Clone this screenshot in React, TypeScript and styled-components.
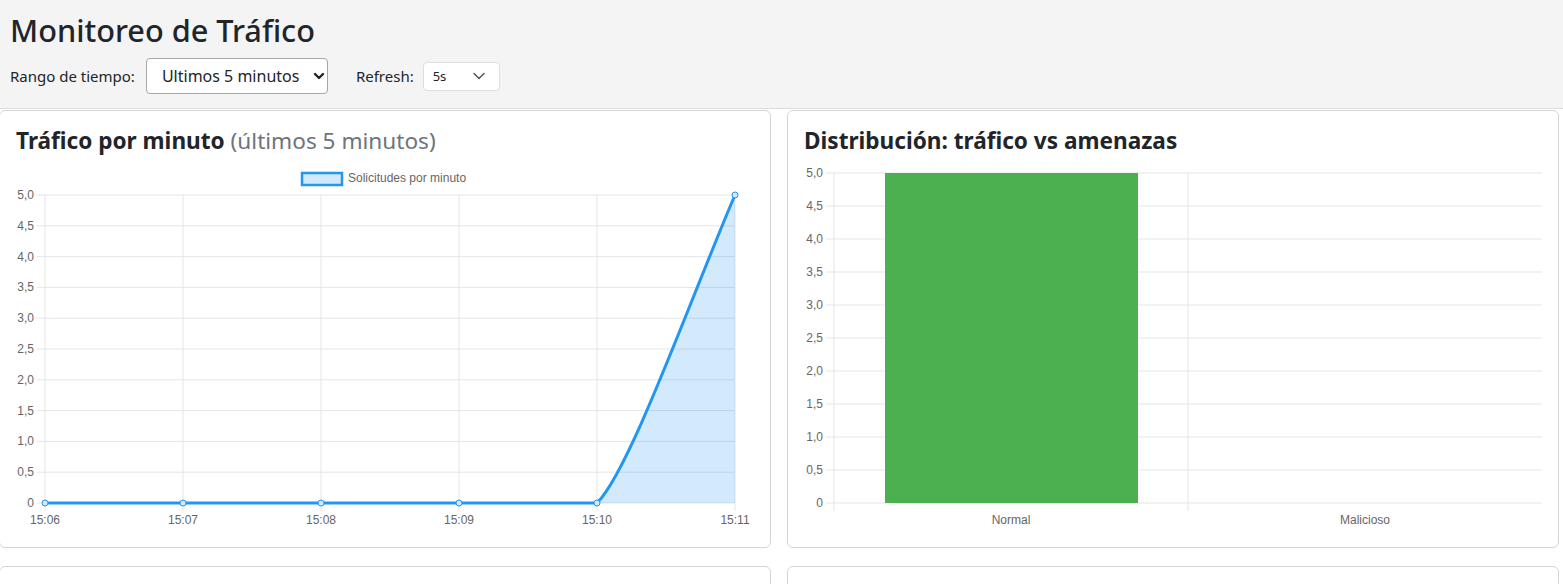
import React from "react";
import styled, { createGlobalStyle } from "styled-components";

const Global = createGlobalStyle`
  html, body { margin: 0; padding: 0; overflow: hidden; background: #ffffff; }
  body { font-family: "Noto Sans", "Open Sans", sans-serif; color: #212529; }
`;

const Header = styled.header`
  background: #f4f4f4;
  border-bottom: 1px solid #dcdcdc;
  padding: 10px 10px 15px;
  height: 109px;
  box-sizing: border-box;
`;

const Title = styled.h1`
  margin: 0;
  font-size: 30.7px;
  font-weight: 500;
  line-height: 40px;
  color: #212529;
`;

const Controls = styled.div`
  display: flex;
  align-items: center;
  margin-top: 8px;
  height: 36px;
`;

const Label = styled.span<{ $gap: number }>`
  font-size: 15px;
  margin-right: ${(p) => p.$gap}px;
  color: #212529;
`;

const SelectWrap = styled.div<{ $w: number; $h: number; $border: string }>`
  position: relative;
  width: ${(p) => p.$w}px;
  height: ${(p) => p.$h}px;
  border: 1px solid ${(p) => p.$border};
  border-radius: 4px;
  background: #fff;
  box-sizing: border-box;
  margin-right: 28px;
  display: flex;
  align-items: center;
`;

const Select = styled.select<{ $size: number; $pl: number }>`
  appearance: none;
  border: none;
  background: transparent;
  font-family: "Noto Sans", "Open Sans", sans-serif;
  font-size: ${(p) => p.$size}px;
  color: #212529;
  padding: 0 0 0 ${(p) => p.$pl}px;
  width: 100%;
  height: 100%;
  outline: none;
`;

const Chevron = styled.svg<{ $right: number }>`
  position: absolute;
  right: ${(p) => p.$right}px;
  top: 50%;
  transform: translateY(-50%);
  pointer-events: none;
`;

const Grid = styled.main`
  display: grid;
  grid-template-columns: 772px 772px;
  column-gap: 16px;
  row-gap: 18px;
  padding-top: 1px;
  margin-left: -1px;
`;

const Card = styled.section`
  border: 1px solid #d4d4d4;
  border-radius: 6px;
  background: #fff;
  padding: 16px;
  height: 438px;
  box-sizing: border-box;
  display: flex;
  flex-direction: column;
`;

const CardTitle = styled.h2`
  margin: 0;
  font-size: 22.6px;
  line-height: 28px;
  font-weight: 700;
  color: #212529;
`;

const Muted = styled.span`
  font-weight: 400;
  color: #6c757d;
`;

const ChartSvg = styled.svg`
  display: block;
  width: 738px;
  height: 376px;
  font-family: "Liberation Sans", Arial, sans-serif;
`;

const GRID = "#e5e5e5";
const TICK = "#666";

function LineChart() {
  const yTop = 195;
  const yBot = 503;
  const xs = [45, 183, 321, 459, 597, 735];
  const labels = ["15:06", "15:07", "15:08", "15:09", "15:10", "15:11"];
  const yt = ["0", "0,5", "1,0", "1,5", "2,0", "2,5", "3,0", "3,5", "4,0", "4,5", "5,0"];
  const step = (yBot - yTop) / 10;
  const curve = "C630,470 690,300 735,195";
  return (
    <ChartSvg viewBox="0 0 738 376">
      <g transform="translate(-16,-155)">
        <rect x={302} y={173} width={40} height={12} fill="#d2e8fb" stroke="#2196f3" strokeWidth={2.5} />
        <text x={348} y={182} fontSize={12} fill={TICK}>Solicitudes por minuto</text>
        {yt.map((t, i) => {
          const y = yBot - i * step;
          return (
            <g key={t}>
              <line x1={37} x2={735} y1={y} y2={y} stroke={GRID} strokeWidth={1} />
              <text x={34} y={y + 4} fontSize={12} fill={TICK} textAnchor="end">{t}</text>
            </g>
          );
        })}
        {xs.map((x, i) => (
          <g key={x}>
            <line x1={x} x2={x} y1={yTop} y2={511} stroke={GRID} strokeWidth={1} />
            <text x={x} y={524} fontSize={12} fill={TICK} textAnchor="middle">{labels[i]}</text>
          </g>
        ))}
        <path d={`M597,503 ${curve} L735,503 Z`} fill="rgba(33,150,243,0.2)" />
        <path d={`M45,503 L597,503 ${curve}`} fill="none" stroke="#2196f3" strokeWidth={3} />
        {xs.map((x, i) => (
          <circle key={x} cx={x} cy={i === 5 ? 195 : 503} r={3} fill="#d2e8fb" stroke="#2196f3" strokeWidth={1} />
        ))}
      </g>
    </ChartSvg>
  );
}

function BarChart() {
  const yTop = 173;
  const yBot = 503;
  const yt = ["0", "0,5", "1,0", "1,5", "2,0", "2,5", "3,0", "3,5", "4,0", "4,5", "5,0"];
  const step = (yBot - yTop) / 10;
  return (
    <ChartSvg viewBox="0 0 738 376">
      <g transform="translate(-804,-155)">
        {yt.map((t, i) => {
          const y = yBot - i * step;
          return (
            <g key={t}>
              <line x1={826} x2={1542} y1={y} y2={y} stroke={GRID} strokeWidth={1} />
              <text x={823} y={y + 4} fontSize={12} fill={TICK} textAnchor="end">{t}</text>
            </g>
          );
        })}
        <line x1={834} x2={834} y1={yTop} y2={511} stroke={GRID} />
        <line x1={1188} x2={1188} y1={yTop} y2={511} stroke={GRID} />
        <rect x={885} y={yTop} width={253} height={yBot - yTop} fill="#4caf50" />
        <text x={1011} y={524} fontSize={12} fill={TICK} textAnchor="middle">Normal</text>
        <text x={1365} y={524} fontSize={12} fill={TICK} textAnchor="middle">Malicioso</text>
      </g>
    </ChartSvg>
  );
}

const ChevronIcon = ({ right, w, sw, color }: { right: number; w: number; sw: number; color: string }) => (
  <Chevron $right={right} width={w} height={w} viewBox="0 0 24 24" fill="none" stroke={color} strokeWidth={sw} strokeLinecap="round" strokeLinejoin="round">
    <path d="M6 9l6 6 6-6" />
  </Chevron>
);

export default function App() {
  return (
    <>
      <Global />
      <Header>
        <Title>Monitoreo de Tráfico</Title>
        <Controls>
          <Label $gap={11}>Rango de tiempo:</Label>
          <SelectWrap $w={182} $h={36} $border="#a6a6a6">
            <Select $size={16} $pl={15} defaultValue="5">
              <option value="5">Ultimos 5 minutos</option>
              <option value="15">Ultimos 15 minutos</option>
              <option value="60">Ultima hora</option>
            </Select>
            <ChevronIcon right={0} w={16} sw={3.6} color="#222" />
          </SelectWrap>
          <Label $gap={9}>Refresh:</Label>
          <SelectWrap $w={77} $h={29} $border="#dedede">
            <Select $size={13} $pl={9} defaultValue="5s">
              <option value="5s">5s</option>
              <option value="10s">10s</option>
              <option value="30s">30s</option>
            </Select>
            <ChevronIcon right={10} w={20} sw={1.8} color="#555" />
          </SelectWrap>
        </Controls>
      </Header>
      <Grid>
        <Card>
          <CardTitle>
            Tráfico por minuto <Muted>(últimos 5 minutos)</Muted>
          </CardTitle>
          <LineChart />
        </Card>
        <Card>
          <CardTitle>Distribución: tráfico vs amenazas</CardTitle>
          <BarChart />
        </Card>
        <Card />
        <Card />
      </Grid>
    </>
  );
}
